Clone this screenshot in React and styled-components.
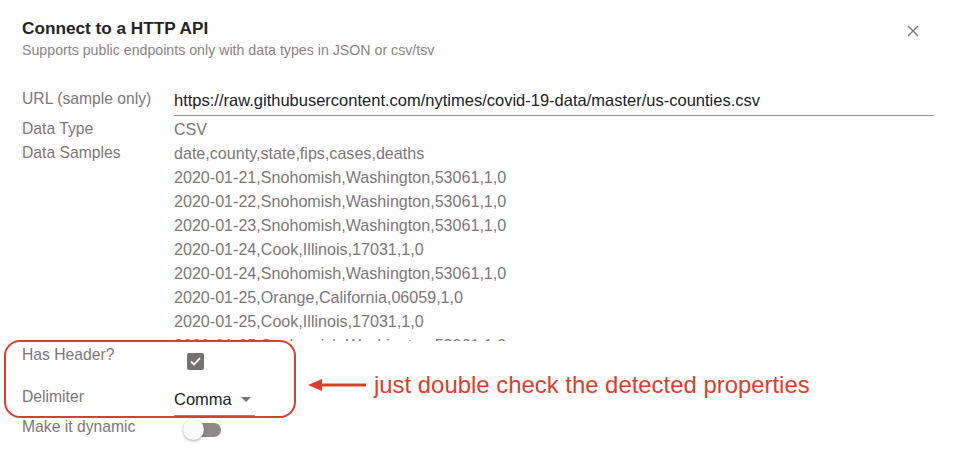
import styled, { createGlobalStyle } from 'styled-components'

const GlobalStyle = createGlobalStyle`
  html, body { margin: 0; padding: 0; background: #fff; }
  body { font-family: "Liberation Sans", Arial, sans-serif; }
`

const url = 'https://raw.githubusercontent.com/nytimes/covid-19-data/master/us-counties.csv'

const samples = [
    'date,county,state,fips,cases,deaths',
    '2020-01-21,Snohomish,Washington,53061,1,0',
    '2020-01-22,Snohomish,Washington,53061,1,0',
    '2020-01-23,Snohomish,Washington,53061,1,0',
    '2020-01-24,Cook,Illinois,17031,1,0',
    '2020-01-24,Snohomish,Washington,53061,1,0',
    '2020-01-25,Orange,California,06059,1,0',
    '2020-01-25,Cook,Illinois,17031,1,0',
    '2020-01-25,Snohomish,Washington,53061,1,0',
]

const App = () => {
    return (
        <Modal>
            <GlobalStyle />
            <Header>
                <div>
                    <Title>Connect to a HTTP API</Title>
                    <Subtitle>Supports public endpoints only with data types in JSON or csv/tsv</Subtitle>
                </div>
                <CloseButton aria-label="close">
                    <svg width="12" height="12" viewBox="0 0 12 12">
                        <path d="M1 1 L11 11 M11 1 L1 11" stroke="#7b7676" strokeWidth="1.4" fill="none" />
                    </svg>
                </CloseButton>
            </Header>

            <Form>
                <Row>
                    <Label>URL (sample only)</Label>
                    <UrlField>{url}</UrlField>
                </Row>
                <Row>
                    <Label>Data Type</Label>
                    <Value>CSV</Value>
                </Row>
                <Row>
                    <Label>Data Samples</Label>
                    <Samples>
                        {samples.map((s, i) => <div key={i}>{s}</div>)}
                    </Samples>
                </Row>

                <Highlighted>
                    <Row $h={38}>
                        <Label $top={2}>Has Header?</Label>
                        <Checkbox>
                            <svg width="11" height="9" viewBox="0 0 11 9">
                                <path d="M1 4.5 L4 7.5 L10 1.2" stroke="#fff" strokeWidth="1.8" fill="none" />
                            </svg>
                        </Checkbox>
                    </Row>
                    <Row $h={36}>
                        <Label $top={6}>Delimiter</Label>
                        <Select>
                            Comma
                            <Caret />
                        </Select>
                    </Row>
                    <Ring />
                    <Callout>
                        <svg width="60" height="14" viewBox="0 0 60 14">
                            <path d="M0 7 L14 1 L14 13 Z" fill="#d9402b" />
                            <path d="M12 7 L58 7" stroke="#d9402b" strokeWidth="3" />
                        </svg>
                        <span>just double check the detected properties</span>
                    </Callout>
                </Highlighted>

                <Row>
                    <Label>Make it dynamic</Label>
                    <Switch>
                        <Track />
                        <Thumb />
                    </Switch>
                </Row>
            </Form>
        </Modal>
    )
}

const Modal = styled.div`
    width: 955px;
    height: 467px;
    overflow: hidden;
    background: #fff;
    box-sizing: border-box;
`

const Header = styled.header`
    display: flex;
    justify-content: space-between;
    align-items: flex-start;
    padding: 17px 36px 0 22px;
`

const Title = styled.h2`
    margin: 0;
    font-size: 17.2px;
    line-height: 22px;
    font-weight: 700;
    color: #262424;
`

const Subtitle = styled.p`
    margin: 2px 0 0;
    font-size: 14.2px;
    line-height: 18px;
    color: #8a8484;
`

const CloseButton = styled.button`
    border: none;
    background: none;
    padding: 0;
    margin-top: 8px;
    width: 12px;
    height: 12px;
    display: flex;
    cursor: pointer;
`

const Form = styled.div`
    padding: 28px 21px 0 22px;
    display: flex;
    flex-direction: column;
`

const Row = styled.div`
    display: grid;
    grid-template-columns: 152px 1fr;
    align-items: start;
    ${p => p.$h && `height: ${p.$h}px;`}
`

const Label = styled.div`
    font-size: 15.7px;
    line-height: 24px;
    color: #7d7777;
    padding-top: ${p => p.$top || 0}px;
    white-space: nowrap;
`

const UrlField = styled.div`
    font-size: 16.5px;
    line-height: 22px;
    color: #222;
    padding: 2px 0 4px;
    border-bottom: 1px solid #9a9696;
    margin-bottom: 1px;
`

const Value = styled.div`
    font-size: 16.1px;
    line-height: 24px;
    color: #7d7777;
    white-space: nowrap;
`

const Samples = styled(Value)`
    height: 200px;
    overflow: hidden;
`

const Highlighted = styled.div`
    position: relative;
`

const Ring = styled.div`
    position: absolute;
    left: -18px;
    top: -1px;
    width: 292px;
    height: 78px;
    box-sizing: border-box;
    border: 2.5px solid #d9402b;
    border-radius: 16px;
    pointer-events: none;
`

const Callout = styled.div`
    position: absolute;
    left: 286px;
    top: 29px;
    display: flex;
    align-items: center;
    gap: 6px;
    color: #d9402b;
    font-size: 23.9px;
    line-height: 30px;
    white-space: nowrap;
    svg { flex: none; }
`

const Checkbox = styled.span`
    margin: 12px 0 0 13px;
    width: 17px;
    height: 17px;
    border-radius: 2px;
    background: #767272;
    display: flex;
    align-items: center;
    justify-content: center;
`

const Select = styled.div`
    justify-self: start;
    display: flex;
    align-items: center;
    gap: 9px;
    font-size: 16.5px;
    line-height: 20px;
    color: #222;
    margin-top: 10px;
    padding: 0 6px 6px 0;
    border-bottom: 1px solid #8f8b8b;
    width: 75px;
`

const Caret = styled.span`
    width: 0;
    height: 0;
    border-left: 5px solid transparent;
    border-right: 5px solid transparent;
    border-top: 5px solid #757171;
`

const Switch = styled.span`
    position: relative;
    width: 38px;
    height: 22px;
    margin: 4px 0 0 9px;
`

const Track = styled.span`
    position: absolute;
    left: 4px;
    top: 4px;
    width: 34px;
    height: 14px;
    border-radius: 7px;
    background: #8e8a8a;
`

const Thumb = styled.span`
    position: absolute;
    left: 0;
    top: 0;
    width: 21px;
    height: 21px;
    border-radius: 50%;
    background: #fafafa;
    box-shadow: 0 1px 3px rgba(0, 0, 0, 0.35);
`

export default App
